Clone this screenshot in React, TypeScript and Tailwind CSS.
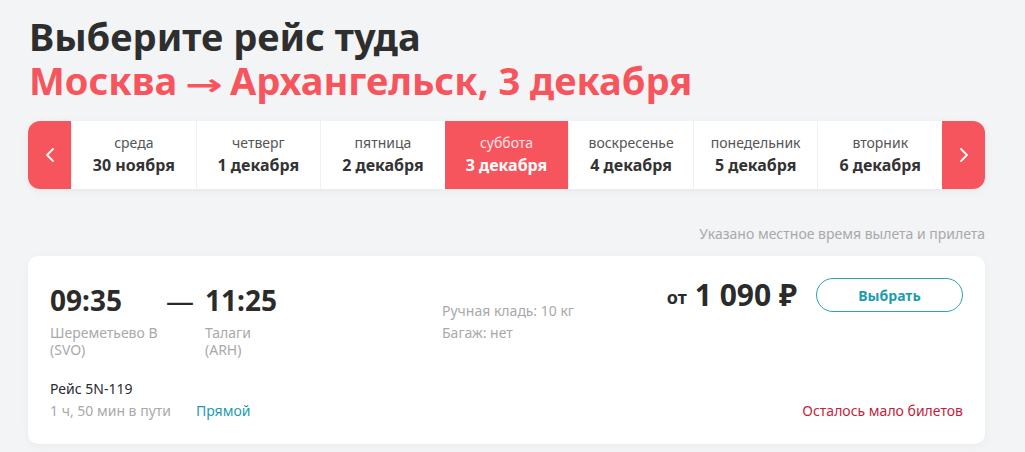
import React from 'react';

const days = [
    { name: 'среда', date: '30 ноября' },
    { name: 'четверг', date: '1 декабря' },
    { name: 'пятница', date: '2 декабря' },
    { name: 'суббота', date: '3 декабря', active: true },
    { name: 'воскресенье', date: '4 декабря' },
    { name: 'понедельник', date: '5 декабря' },
    { name: 'вторник', date: '6 декабря' },
];

const Chevron: React.FC<{ dir: 'left' | 'right' }> = ({ dir }) => (
    <svg width="10" height="16" viewBox="0 0 10 16" fill="none">
        <path
            d={dir === 'left' ? 'M8 2 L2 8 L8 14' : 'M2 2 L8 8 L2 14'}
            stroke="white"
            strokeWidth="1.8"
            strokeLinecap="round"
            strokeLinejoin="round"
        />
    </svg>
);

const App: React.FC = () => {
    return (
        <div className="min-h-[452px] bg-[#f3f4f6] pl-[28px] pr-[40px] pt-[14px] font-['Noto_Sans',sans-serif] text-[#2b2b2b]">
            {/* Heading */}
            <h1 className="pl-[1px] text-[38px] font-bold leading-[44px] text-[#2e2e2e]">Выберите рейс туда</h1>
            <h2 className="pl-[1px] text-[38px] font-bold leading-[44px] text-[#f7555d]">
                Москва <span className="mx-[4px] inline-block scale-x-[1.5] font-['DejaVu_Sans',sans-serif] text-[30px] leading-none">→</span> Архангельск, 3 декабря
            </h2>

            {/* Date strip */}
            <div className="mt-[19px] flex h-[68px] overflow-hidden rounded-[12px] bg-white shadow-[0_2px_8px_rgba(0,0,0,0.05)]">
                <button className="flex w-[43px] items-center justify-center bg-[#f7555d]">
                    <Chevron dir="left" />
                </button>
                {days.map((d, i) => (
                    <div
                        key={i}
                        className={
                            d.active
                                ? 'flex flex-1 flex-col items-center justify-center bg-[#f7555d] text-white'
                                : 'flex flex-1 flex-col items-center justify-center border-l border-[#f0f0f0] first:border-l-0'
                        }
                    >
                        <span className={d.active ? 'text-[14px] leading-[20px] text-[#ffe4e6]' : 'text-[14px] leading-[20px] text-[#555]'}>{d.name}</span>
                        <span className={d.active ? 'text-[16px] font-bold leading-[24px] text-white' : 'text-[16px] font-bold leading-[24px] text-[#333]'}>{d.date}</span>
                    </div>
                ))}
                <button className="flex w-[43px] items-center justify-center bg-[#f7555d]">
                    <Chevron dir="right" />
                </button>
            </div>

            {/* Note */}
            <p className="mt-[35px] text-right text-[14px] leading-[20px] text-[#a9a9a9]">Указано местное время вылета и прилета</p>

            {/* Flight card */}
            <div className="mt-[12px] rounded-[10px] bg-white px-[22px] pb-[22px] pt-[24px] shadow-[0_2px_8px_rgba(0,0,0,0.04)]">
                <div className="flex items-start">
                    <div className="w-[116px]">
                        <div className="text-[28px] font-bold leading-[40px] text-[#2b2b2b]">09:35</div>
                        <div className="mt-[4px] text-[14px] leading-[17px] text-[#a9a9a9]">Шереметьево В<br />(SVO)</div>
                    </div>
                    <div className="w-[39px] text-[28px] leading-[40px] text-[#2b2b2b]">—</div>
                    <div className="w-[237px]">
                        <div className="text-[28px] font-bold leading-[40px] text-[#2b2b2b]">11:25</div>
                        <div className="mt-[4px] text-[14px] leading-[17px] text-[#a9a9a9]">Талаги<br />(ARH)</div>
                    </div>
                    <div className="pt-[20px] text-[14px] leading-[22px] text-[#a9a9a9]">
                        <div>Ручная кладь: 10 кг</div>
                        <div>Багаж: нет</div>
                    </div>
                    <div className="-mt-[5px] ml-auto flex items-center">
                        <span className="mr-[8px] mt-[4px] text-[18px] font-bold text-[#2b2b2b]">от</span>
                        <span className="text-[30px] font-bold leading-[40px] text-[#2b2b2b]">1 090 ₽</span>
                        <button className="ml-[19px] h-[34px] w-[147px] rounded-full border border-[#2aa3b3] text-[14px] font-bold text-[#1f9bb0]">Выбрать</button>
                    </div>
                </div>

                <div className="mt-[20px] text-[14px] leading-[22px] text-[#2b2b2b]">Рейс 5N-119</div>
                <div className="flex text-[14px] leading-[22px]">
                    <span className="text-[#a9a9a9]">1 ч, 50 мин в пути</span>
                    <span className="ml-[25px] text-[#1f9bb0]">Прямой</span>
                    <span className="ml-auto text-[#c41e3a]">Осталось мало билетов</span>
                </div>
            </div>
        </div>
    );
};

export default App;
